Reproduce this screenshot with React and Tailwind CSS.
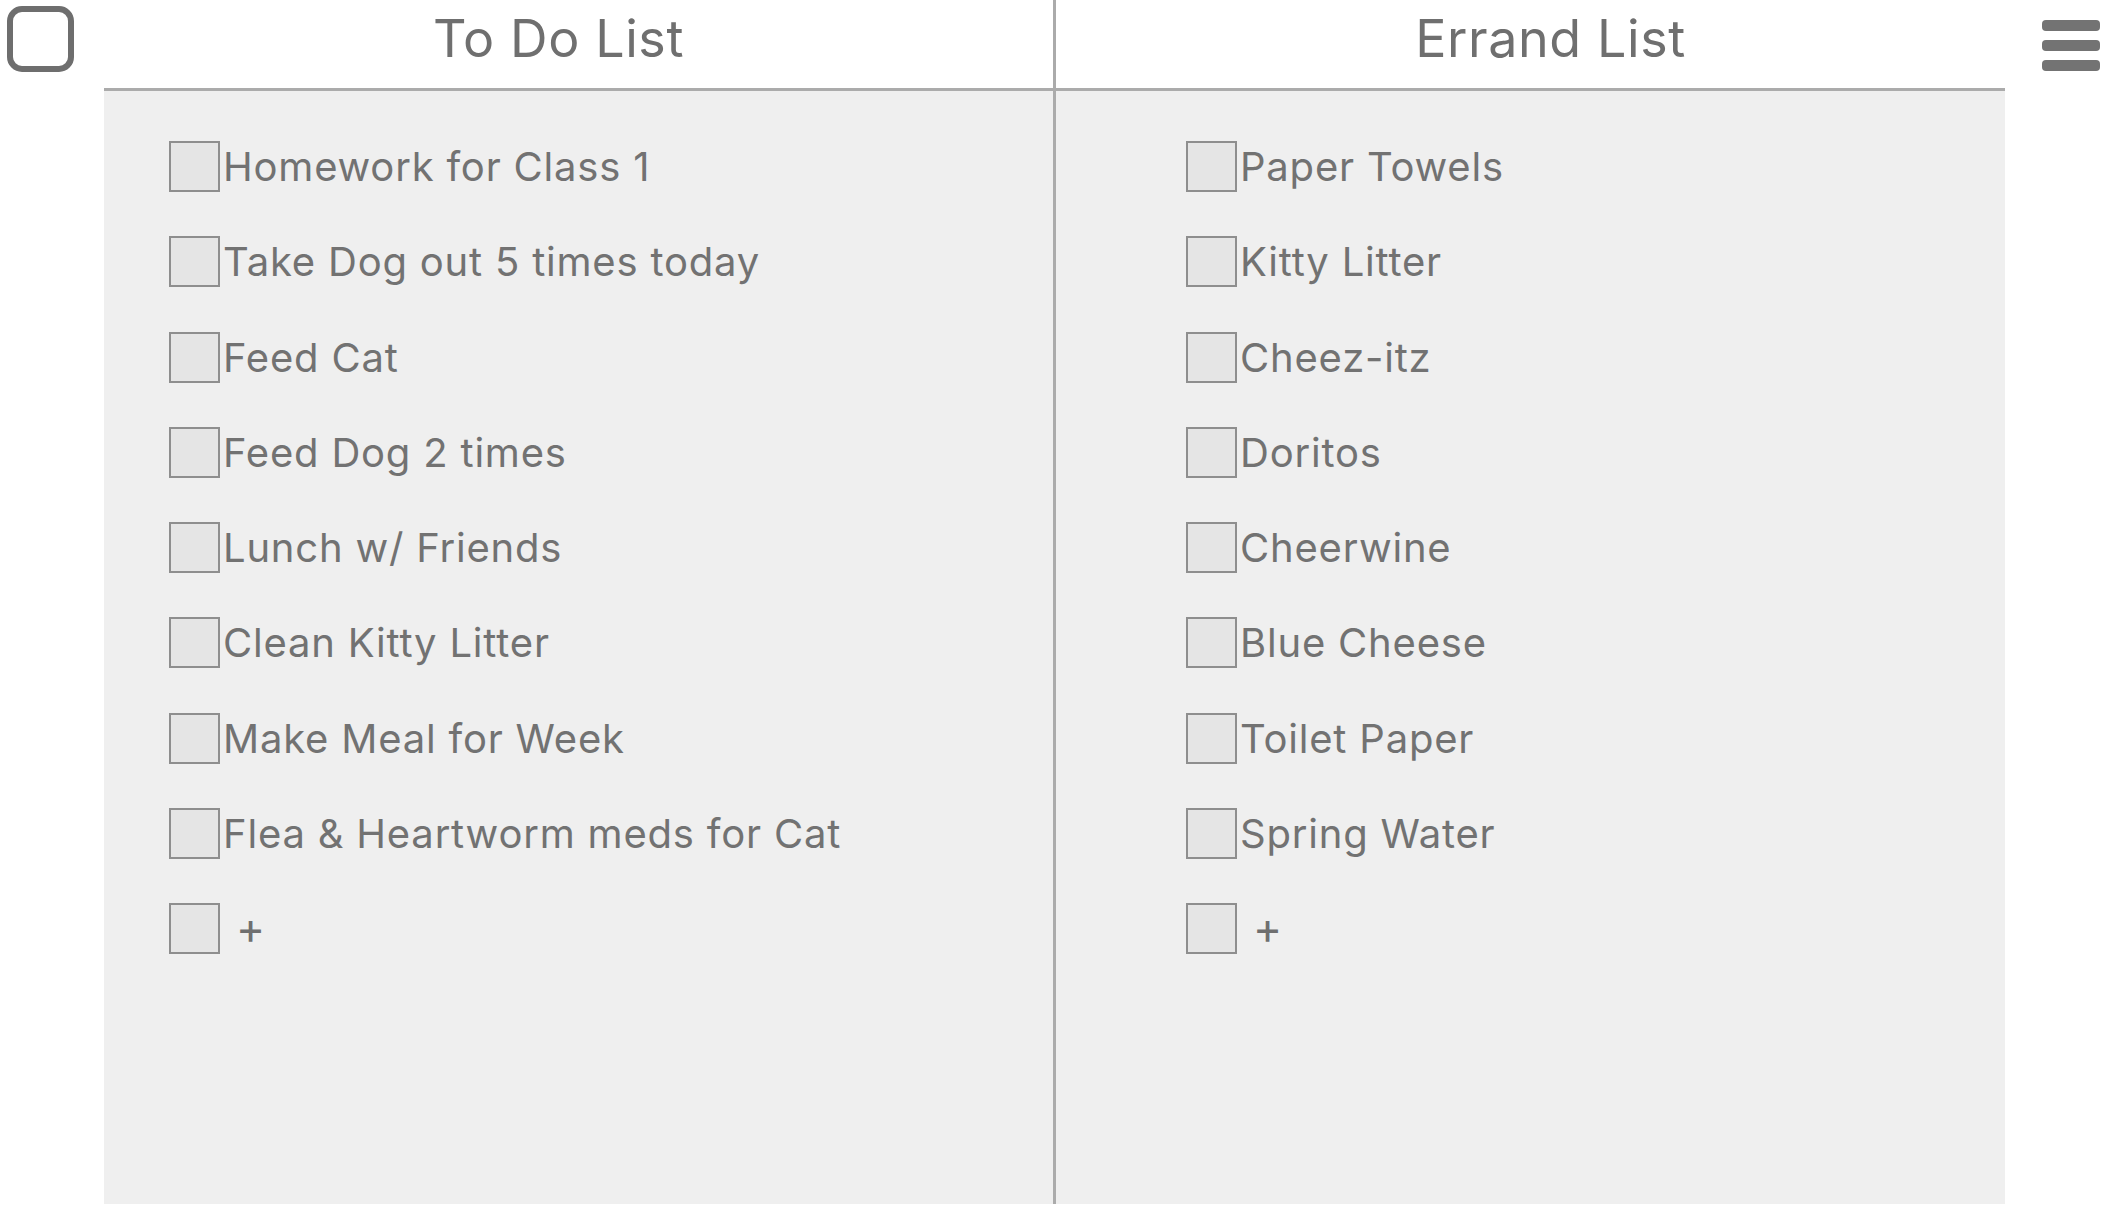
import React from 'react';

const todoItems = [
  'Homework for Class 1',
  'Take Dog out 5 times today',
  'Feed Cat',
  'Feed Dog 2 times',
  'Lunch w/ Friends',
  'Clean Kitty Litter',
  'Make Meal for Week',
  'Flea & Heartworm meds for Cat',
];

const errandItems = [
  'Paper Towels',
  'Kitty Litter',
  'Cheez-itz',
  'Doritos',
  'Cheerwine',
  'Blue Cheese',
  'Toilet Paper',
  'Spring Water',
];

const CheckRow = ({ label, add = false }) => (
  <div className="flex items-center h-[51px]">
    <div className="w-[51px] h-[51px] shrink-0 bg-[#e5e5e5] border-2 border-[#8e8e8e]" />
    {add ? (
      <span className="ml-[16px] text-[44px] leading-[51px] text-[#6f6f6f]">+</span>
    ) : (
      <span className="ml-[3px] text-[40px] leading-[51px] tracking-[0.8px] text-[#727272] whitespace-nowrap">{label}</span>
    )}
  </div>
);

const ListColumn = ({ title, items, headerClass, bodyClass, colClass }) => (
  <div className={`flex flex-col ${colClass}`}>
    {/* Header */}
    <div className={`h-[91px] border-b-[3px] border-[#ababab] bg-white flex justify-center pt-[13px] ${headerClass}`}>
      <h1 className="text-[52px] leading-[52px] tracking-[0.6px] text-[#6f6f6f] font-normal">{title}</h1>
    </div>
    {/* Items */}
    <div className={`flex-1 bg-[#efefef] flex flex-col gap-[44.25px] pt-[50px] ${bodyClass}`}>
      {items.map((item) => (
        <CheckRow key={item} label={item} />
      ))}
      <CheckRow add />
    </div>
  </div>
);

export default function App() {
  return (
    <div className="w-[2110px] h-[1208px] bg-white flex" style={{ fontFamily: 'Inter, "Noto Sans", sans-serif' }}>
      {/* Left toggle */}
      <div className="w-[104px] shrink-0 pl-[7px] pt-[6px]">
        <div className="w-[67px] h-[66px] rounded-[15px] border-[6px] border-[#6e6e6e]" />
      </div>

      {/* Lists */}
      <div className="flex h-[1204px]">
        <ListColumn
          title="To Do List"
          items={todoItems}
          colClass="w-[952px] border-r-[3px] border-[#ababab]"
          headerClass="pr-[40px]"
          bodyClass="pl-[65px]"
        />
        <ListColumn
          title="Errand List"
          items={errandItems}
          colClass="w-[949px]"
          headerClass="pl-[40px]"
          bodyClass="pl-[130px]"
        />
      </div>

      {/* Menu */}
      <div className="flex-1 flex justify-end pr-[10px] pt-[20px]">
        <div className="flex flex-col gap-[9px]">
          <span className="block w-[58px] h-[11px] rounded-[4px] bg-[#737373]" />
          <span className="block w-[58px] h-[11px] rounded-[4px] bg-[#737373]" />
          <span className="block w-[58px] h-[11px] rounded-[4px] bg-[#737373]" />
        </div>
      </div>
    </div>
  );
}
